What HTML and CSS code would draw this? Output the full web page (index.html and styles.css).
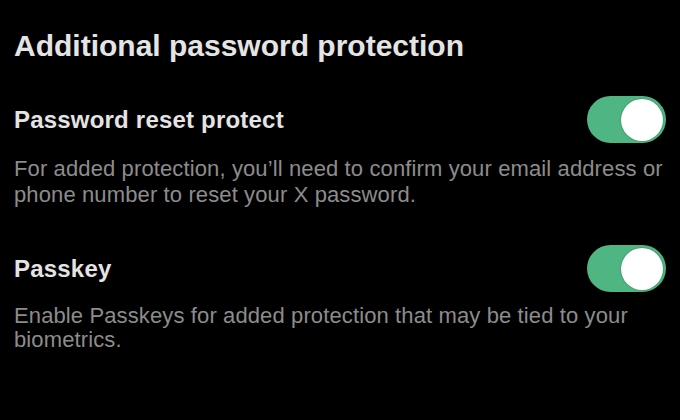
FILE: index.html
```html
<!DOCTYPE html>
<html lang="en">
<head>
<meta charset="utf-8">
<title>Additional password protection</title>
<link rel="stylesheet" href="styles.css">
</head>
<body>
<main class="page">
  <h1 class="title">Additional password protection</h1>
  <section class="setting">
    <div class="row">
      <h2 class="label">Password reset protect</h2>
      <span class="toggle" role="switch" aria-checked="true"><span class="knob"></span></span>
    </div>
    <p class="desc">For added protection, you’ll need to confirm your email address or phone number to reset your X password.</p>
  </section>
  <section class="setting second">
    <div class="row">
      <h2 class="label">Passkey</h2>
      <span class="toggle" role="switch" aria-checked="true"><span class="knob"></span></span>
    </div>
    <p class="desc narrow">Enable Passkeys for added protection that may be tied to your biometrics.</p>
  </section>
</main>
</body>
</html>
```
FILE: styles.css
```css
html, body {
  margin: 0;
  padding: 0;
  background: #000;
  height: 100%;
}
body {
  font-family: "Liberation Sans", Arial, sans-serif;
  color: #e6e6e6;
}
.page {
  padding: 28px 14px 0 14px;
  width: 652px;
}
.title {
  margin: 0;
  font-size: 30px;
  line-height: 36px;
  font-weight: 700;
  color: #e4e4e4;
}
.setting {
  margin-top: 32px;
}
.setting.second {
  margin-top: 37px;
}
.row {
  display: flex;
  align-items: center;
  justify-content: space-between;
}
.label {
  margin: 0;
  font-size: 24px;
  line-height: 30px;
  font-weight: 700;
  letter-spacing: 0.2px;
  color: #e4e4e4;
}
.toggle {
  box-sizing: border-box;
  width: 79px;
  height: 47px;
  border-radius: 24px;
  background: #4fb583;
  display: flex;
  align-items: center;
  justify-content: flex-end;
  padding-right: 3px;
}
.knob {
  width: 42px;
  height: 42px;
  border-radius: 50%;
  background: #fff;
  box-shadow: 0 0 2px rgba(0, 0, 0, 0.35);
}
.desc {
  margin: 13px 0 0 0;
  font-size: 22px;
  line-height: 26px;
  letter-spacing: 0.12px;
  color: #8c8c8c;
  width: 662px;
}
.desc.narrow {
  margin-top: 12px;
  line-height: 24px;
}
```
